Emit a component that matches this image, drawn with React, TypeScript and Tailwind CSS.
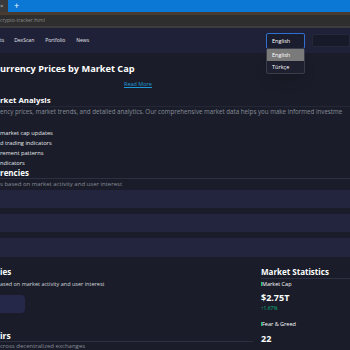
import React from 'react'

const FONT = "font-['Open_Sans',_'Noto_Sans',_sans-serif]"

function Chrome() {
  return (
    <>
      {/* Tab strip */}
      <div className="h-[12px] flex bg-[#0b78d6]">
        <div className="w-[8px] bg-[#3a3a3a] text-[6px] leading-[12px] text-[#c8c8c8] overflow-hidden">×</div>
        <div className="pl-[6px] text-white text-[9px] leading-[12px]">+</div>
      </div>
      <div className="h-[3px] bg-[#4a3b30]" />
      {/* Address bar */}
      <div className="h-[11px] bg-[#2e2e2e] text-[5px] leading-[11px] text-[#8d8d8d] whitespace-nowrap">crypto-tracker.html</div>
      <div className="h-[2px] bg-[#3c3c3c]" />
    </>
  )
}

function Nav() {
  return (
    <div className="relative h-[25px] bg-[#1f2138] flex items-center text-[5px] text-[#e5e7eb] whitespace-nowrap">
      <span>ts</span>
      <span className="ml-[10px]">DexScan</span>
      <span className="ml-[11px]">Portfolio</span>
      <span className="ml-[11px]">News</span>
      <div className="flex-1" />
      <div className="w-[39px] h-[16px] mr-[7px] border border-[#2f6fd0] rounded-[2px] bg-[#1a1d2e] text-[5.5px] leading-[14px] pl-[5px] text-white">English</div>
      <div className="w-[38px] h-[13px] bg-[#171a28] border border-[#24283a] rounded-l-[2px]" />

      {/* open select menu */}
      <div className="absolute left-[266px] top-[20px] w-[39px] bg-[#1e2030] border border-[#3a3d4a] rounded-[2px] shadow-lg text-[5.5px] text-white">
        <div className="h-[12px] leading-[12px] bg-[#7a7a7a] pl-[5px]">English</div>
        <div className="h-[12px] leading-[12px] pl-[5px]">Türkçe</div>
      </div>
    </div>
  )
}

const FEATURES = ['market cap updates', 'd trading indicators', 'rement patterns', 'ndicators']

export default function App() {
  return (
    <div className={`w-[350px] h-[350px] overflow-hidden bg-[#1a1d29] ${FONT}`}>
      <Chrome />
      <Nav />

      <main className="whitespace-nowrap overflow-hidden">
        <h1 className="mt-[9px] text-[9.2px] leading-[14px] font-bold text-white">urrency Prices by Market Cap</h1>
        <div className="mt-[3px] pl-[124px] text-[5.5px] leading-[10px] text-[#1e9ad6] underline">Read More</div>

        <h2 className="mt-[5px] text-[7.8px] leading-[12px] font-bold text-white border-b border-[#232736]">rket Analysis</h2>
        <p className="text-[6.2px] leading-[10px] text-[#878c98]">ency prices, market trends, and detailed analytics. Our comprehensive market data helps you make informed investme</p>

        <ul className="mt-[11px] text-[5.7px] leading-[10px] text-[#e5e7eb]">
          {FEATURES.map(f => <li key={f}>{f}</li>)}
        </ul>

        <h2 className="text-[8px] leading-[10px] font-bold text-white">rencies</h2>
        <div className="border-t border-[#2c3040] text-[6px] leading-[11px] text-[#878c98]">s based on market activity and user interest</div>

        <div className="flex flex-col gap-[6px]">
          <div className="h-[18px] bg-[#23253f]" />
          <div className="h-[18px] bg-[#23253f]" />
          <div className="h-[19px] bg-[#23253f]" />
        </div>

        <div className="grid grid-cols-[253px_1fr] gap-[8px]">
          <div>
            <h2 className="mt-[9px] text-[8px] leading-[12px] font-bold text-white">ies</h2>
            <div className="mt-[2px] text-[5.5px] leading-[8px] text-[#d1d5db]">ased on market activity and user interest</div>
            <div className="mt-[7px] w-[25px] h-[18px] rounded-r-[4px] bg-[#252849]" />
            <h2 className="mt-[17px] text-[8.5px] leading-[11px] font-bold text-white border-b border-[#2c3040]">irs</h2>
            <div className="text-[6px] leading-[9px] text-[#878c98]">cross decentralized exchanges</div>
          </div>

          <div>
            <h3 className="mt-[9px] text-[8px] leading-[12px] font-bold text-white border-b border-[#2c3040]">Market Statistics</h3>
            <div className="mt-[1px] flex items-center text-[5.5px] leading-[8px] text-white">
              <span className="w-[1px] h-[4px] bg-[#22c55e]" />
              <span>Market Cap</span>
            </div>
            <div className="mt-[4px] text-[9px] leading-[12px] font-bold text-white">$2.75T</div>
            <div className="mt-[1px] text-[5px] leading-[7px] text-[#10b981]">↑1.67%</div>
            <div className="mt-[8px] flex items-center text-[5.5px] leading-[8px] text-white">
              <span className="w-[1px] h-[4px] bg-[#22c55e]" />
              <span>Fear &amp; Greed</span>
            </div>
            <div className="mt-[5px] text-[9px] leading-[12px] font-bold text-white">22</div>
          </div>
        </div>
      </main>
    </div>
  )
}
